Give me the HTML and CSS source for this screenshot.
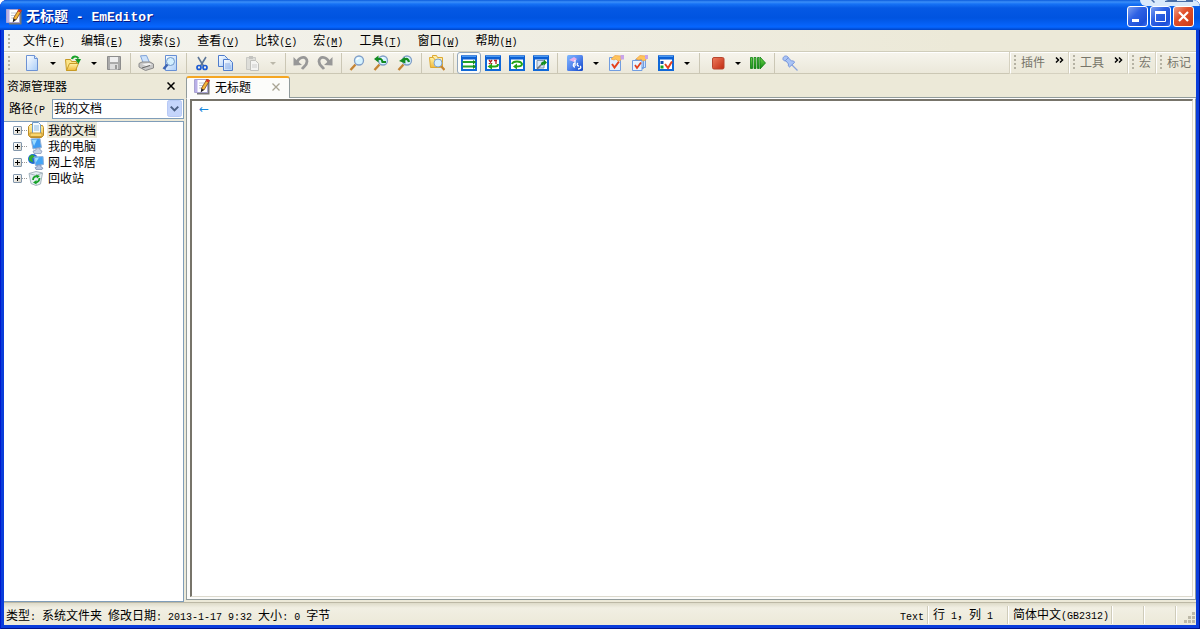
FILE: index.html
```html
<!DOCTYPE html>
<html lang="zh-CN">
<head>
<meta charset="utf-8">
<title>无标题 - EmEditor</title>
<link rel="stylesheet" href="styles.css">
</head>
<body>
<svg class="defs" aria-hidden="true">
<defs>
<linearGradient id="gpage" x2="1" y2="1"><stop offset="0" stop-color="#fff"/><stop offset="1" stop-color="#a9cdf8"/></linearGradient>
<linearGradient id="gfold" y2="1" x2="0"><stop offset="0" stop-color="#fff3a8"/><stop offset="1" stop-color="#f0b93c"/></linearGradient>
<linearGradient id="gblue" x2="1" y2="1"><stop offset="0" stop-color="#7fb8ff"/><stop offset=".45" stop-color="#5a8cf0"/><stop offset="1" stop-color="#1045c8"/></linearGradient>
<linearGradient id="gred" x2="1" y2="1"><stop offset="0" stop-color="#ee7c5e"/><stop offset="1" stop-color="#c02a10"/></linearGradient>
<linearGradient id="ggreen" x2="0" y2="1"><stop offset="0" stop-color="#6fd84e"/><stop offset="1" stop-color="#11890f"/></linearGradient>
<symbol id="app" viewBox="0 0 16 16"><path d="M3 2.500h12.500v13H3z" fill="#777"/><path d="M.5.5h13v13H.5z" fill="#fff" stroke="#a9a3d0"/><path d="M1 1h2.500v12H1z" fill="#b9b0e8"/><path d="M5 4h5M5 6.500h4M5 9h3" stroke="#c3c9d8"/><path d="M13 0l2.700 1.400-5.700 9.600-2.700-1.400z" fill="#f5b73a" stroke="#6b3510" stroke-width=".7"/><path d="M13 0l2.700 1.400-1.300 2.200-2.700-1.400z" fill="#d5362a"/><path d="M7.300 9.600L10 11l-3.300 2.500z" fill="#222"/></symbol>
<symbol id="new" viewBox="0 0 16 16"><path d="M2.500.5h8l3 3v12h-11z" fill="url(#gpage)" stroke="#6c92d4"/><path d="M10.500.5v3h3" fill="#dceafe" stroke="#6c92d4"/></symbol>
<symbol id="open" viewBox="0 0 16 16"><path d="M.5 4.500h5l1 2h5v9H1.500z" fill="#fbe488" stroke="#c79a25"/><path d="M1.500 15.500l3-7h9l-3 7z" fill="url(#gfold)" stroke="#c79a25"/><path d="M7 4c1-3.500 5-3 6.500-.5" fill="none" stroke="#18a32a" stroke-width="2.200"/><path d="M10 4h6l-2.500 5z" fill="#139824"/></symbol>
<symbol id="save" viewBox="0 0 16 16"><path d="M1.500 1.500h13v13h-13z" fill="#aaa" stroke="#8d8d8d"/><path d="M4 2h8v5H4z" fill="#efefef"/><path d="M4 9h8v5.500H4z" fill="#ddd"/><path d="M9 10h2v4H9z" fill="#999"/></symbol>
<symbol id="print" viewBox="0 0 16 16"><path d="M2.500.8l6-.3 3 7H5z" fill="#cde2fb" stroke="#7fa3d8"/><path d="M1 8.500l3-1.500h8l3.500 2v4l-8 2.500L1 12z" fill="#c7c7c7" stroke="#8a8a8a"/><path d="M4 9l7-1 3 1.500-6 1.500z" fill="#f1f1f1"/><path d="M4 13l8-2.500" stroke="#666"/></symbol>
<symbol id="preview" viewBox="0 0 16 16"><path d="M3.500.5h11v15h-11z" fill="url(#gpage)" stroke="#668fd4"/><circle cx="8.500" cy="6.500" r="4" fill="#d2efff" stroke="#7299c7"/><path d="M5.500 9.500L1.500 14" stroke="#3d65b4" stroke-width="2.500"/></symbol>
<symbol id="cut" viewBox="0 0 16 16"><path d="M4 2l5.500 9M12 2L6.500 11" stroke="#5d7698" stroke-width="1.600"/><circle cx="5" cy="12.500" r="2" fill="none" stroke="#1c5ad2" stroke-width="1.700"/><circle cx="11" cy="12.500" r="2" fill="none" stroke="#1c5ad2" stroke-width="1.700"/></symbol>
<symbol id="copy" viewBox="0 0 16 16"><path d="M.5.5h6l3 3v8h-9z" fill="url(#gpage)" stroke="#4f7ccc"/><path d="M5.500 4.500h6l3 3v8h-9z" fill="url(#gpage)" stroke="#4f7ccc"/><path d="M7 9h5M7 11h6M7 13h6" stroke="#8eaee6"/></symbol>
<symbol id="paste" viewBox="0 0 16 16"><path d="M2.500 2.500h9v12h-9z" fill="#deded9" stroke="#c9c9c4"/><path d="M5 1h4v3H5z" fill="#c3c3bf"/><path d="M6.500 5.500h5l3 3v7h-8z" fill="#f4f4f2" stroke="#c0c0bc"/><path d="M8 10h5M8 12h5" stroke="#ccc"/></symbol>
<symbol id="undo" viewBox="0 0 16 16"><path d="M4 7C7 1 14 1 14 6.500c0 3.500-3 5-5 7.500" fill="none" stroke="#989898" stroke-width="2.800"/><path d="M.5 2l3 3 5.500 5-8.500.5z" fill="#989898"/></symbol>
<symbol id="find" viewBox="0 0 16 16"><path d="M6.500 9.500L1.500 15" stroke="#c48433" stroke-width="2.400"/><circle cx="10" cy="5.500" r="4.500" fill="#d5f3ff" stroke="#819fc8" stroke-width="1.300"/><path d="M7.500 5c.5-1.500 1.500-2 3-2" fill="none" stroke="#fff" stroke-width="1.300"/></symbol>
<symbol id="findn" viewBox="0 0 16 16"><use href="#find"/><path d="M5 4h2.500c1 0 1.500 1 2 3H13" fill="none" stroke="#128a22" stroke-width="2.200"/><path d="M1 4L5.500.5v7z" fill="#128a22"/></symbol>
<symbol id="findp" viewBox="0 0 16 16"><use href="#find"/><path d="M6 6c2-3 5-3 6 1" fill="none" stroke="#128a22" stroke-width="2.200"/><path d="M2 6l6-4 .5 6.500z" fill="#128a22"/></symbol>
<symbol id="findf" viewBox="0 0 16 16"><path d="M3.500.5h4l1 2h5v9h-10z" fill="#fcebab" stroke="#dda931"/><path d="M.5 2.500h4l1 2h6v8H1.500z" fill="url(#gfold)" stroke="#dda931"/><circle cx="9" cy="8" r="4" fill="#d5effd" stroke="#7fa3cf"/><path d="M12 11l3.500 4" stroke="#c6842f" stroke-width="2.300"/></symbol>
<symbol id="win" viewBox="0 0 16 16"><path d="M1 1.500h14v13.500H1z" fill="#fff" stroke="#1169d8" stroke-width="2"/><path d="M0 .5h16v4H0z" fill="#0c5fd2"/><path d="M1 1.500h14" stroke="#4b9bf5"/></symbol>
<symbol id="w1" viewBox="0 0 16 16"><use href="#win"/><path d="M1.500 7h13M1.500 11.500h13" stroke="#22a128" stroke-width="1.800"/><path d="M12 5l3 2-3 2.500zM12 9.500l3 2-3 2.500z" fill="#148d1c"/></symbol>
<symbol id="w2" viewBox="0 0 16 16"><use href="#win"/><path d="M4 5l3 4M7 5L4 9M9 5.500h3M11 5.500v3.500" stroke="#b51e22" stroke-width="1.300"/><path d="M6 11.500h4c2 0 3-1 3-2.500" fill="none" stroke="#24a315" stroke-width="2"/><path d="M2.500 11.500L7 8.500v6z" fill="#24a315"/></symbol>
<symbol id="w3" viewBox="0 0 16 16"><use href="#win"/><path d="M3 9c1-3.500 9-3.500 10 0 0 2-3 2.500-6 2.500" fill="none" stroke="#24a315" stroke-width="2"/><path d="M4 11.500L8 8.500v6z" fill="#24a315"/></symbol>
<symbol id="w4" viewBox="0 0 16 16"><use href="#win"/><path d="M4 5.500h7V13H4z" fill="#d8e8f8" stroke="#8196b0"/><path d="M4 14l5-5" stroke="#777" stroke-width="1.600"/><path d="M8 9.500c0-3 2-3 3-3V4.500l3 3-3 3v-2l-1 2z" fill="#16901d"/></symbol>
<symbol id="conf" viewBox="0 0 16 16"><rect width="16" height="16" rx="1.500" fill="url(#gblue)"/><path d="M2 5l5-3 3 2-3 3z" fill="#e9b0ea"/><path d="M8 5v6M8 8c-2 0-2.500 4 0 4M11 8c-1.500 1-1 3 1 3M11 14c3 0 3.500-2 2-3" fill="none" stroke="#fff" stroke-width="1.300"/></symbol>
<symbol id="prop" viewBox="0 0 16 16"><path d="M1.500 2.500h11v13h-11z" fill="#e1f0ff" stroke="#719de0"/><path d="M4 9l2.500 3.500 4.500-6" fill="none" stroke="#e5421c" stroke-width="2"/><path d="M3 4l4-3.500 6 .5v4l-3 1-2-2-2 1z" fill="#ffc45b" stroke="#eda045" stroke-width=".7"/><path d="M12.500 0H16v4.500h-3.500z" fill="#c8a5ea"/></symbol>
<symbol id="props" viewBox="0 0 16 16"><path d="M5.500 3.500h8v9h-8zM3.500 4.500h8v9h-8z" fill="#d0e3fc" stroke="#719de0"/><path d="M.5 5.500H10v10H.5z" fill="#e8f4ff" stroke="#719de0"/><path d="M3 10l2 3 4-5.500" fill="none" stroke="#e5421c" stroke-width="1.800"/><path d="M4 4l4-3.500 6 .5v4l-3 1-2-2-2 1z" fill="#ffc45b" stroke="#eda045" stroke-width=".7"/><path d="M13 0h3v4h-3z" fill="#c8a5ea"/></symbol>
<symbol id="cust" viewBox="0 0 16 16"><use href="#win"/><path d="M2.500 6h3v3h-3z" fill="#114eae"/><path d="M2.500 10.500h3v3h-3z" fill="#19a51b"/><path d="M7 9l3 4 4-6.500" fill="none" stroke="#e5421c" stroke-width="2"/></symbol>
<symbol id="rec" viewBox="0 0 16 16"><rect x="3.500" y="2.500" width="11.500" height="11.500" rx="1.500" fill="url(#gred)" stroke="#b8452e"/></symbol>
<symbol id="run" viewBox="0 0 16 16"><path d="M.5 2.500h2v11h-2zM4 2.500h2v11H4zM7.500 2.500h1.500v11H7.500zM10 2l5.500 6-5.500 6z" fill="url(#ggreen)" stroke="#0c7d14" stroke-width=".8"/></symbol>
<symbol id="pin" viewBox="0 0 16 16"><path d="M9 9l6.500 6.500" stroke="#89a4dd" stroke-width="1.300"/><path d="M1 4.500C.5 2 3 0 5.500 1.500l1 1.500 3 3c2-.5 3 .5 3 1.500l-5 4.500c-1-.5-1.500-1.500-1-3L4 6C2.500 6 1.500 5.500 1 4.500z" fill="#a9c4f5" stroke="#7796dc"/><path d="M3 6l3.500-3.500" stroke="#7796dc"/></symbol>
<symbol id="docs" viewBox="0 0 16 16"><path d="M.5 4.500l2-2h3l1 1h8l1 2v8l-2 2h-11l-2-2z" fill="url(#gfold)" stroke="#bd8d27"/><path d="M4.500.5h6l2 2v9h-8z" fill="#f4fbff" stroke="#6e9cc9"/><path d="M6 4h5M6 6h5M6 8h5" stroke="#8cb9e0"/><path d="M2 11h12v3.500H2z" fill="#f9d66d" stroke="#c79936"/></symbol>
<symbol id="pc" viewBox="0 0 16 16"><path d="M3 1l9-.5 1.500 9-8.500 1.500z" fill="#3c9bf2" stroke="#9bb4d5"/><path d="M4 2l5-.4L6 8z" fill="#9cdcff"/><path d="M8 10h4v2l2 1-1 2.500H6L5 13l3-1z" fill="#c5d1e5" stroke="#8394b8" stroke-width=".7"/></symbol>
<symbol id="net" viewBox="0 0 16 16"><circle cx="5" cy="5" r="5" fill="#1f6ad4"/><path d="M1 3l3-2.500 3 2-3 2 1 4-4-2z" fill="#35ad32"/><path d="M6 3l9-.5.500 8-8 1z" fill="#45a5f5" stroke="#8fb0da"/><path d="M7 4l4-.4L7.500 9z" fill="#a0e2ff"/><path d="M9 11h4v2l2 1-1 1.500H8l-1-2 2-.5z" fill="#b5c4e0" stroke="#7388b4" stroke-width=".7"/></symbol>
<symbol id="bin" viewBox="0 0 16 16"><path d="M1 3.500l7-2 6.500 1.500-2 11-4.500 1.500-5-2z" fill="#e4edf1" stroke="#a6b5be"/><path d="M1 3.500l7 2 6.500-2.500" fill="none" stroke="#a6b5be"/><path d="M5 10c0-3 2-4 4-3.500M11.500 8c0 3-1.500 4-4 4.500" fill="none" stroke="#18a32a" stroke-width="1.800"/><path d="M8 4.500l4 1.500-3 2.500zM8.500 10v4.500L5 12.500z" fill="#18a32a"/></symbol>
</defs>
</svg>

<div class="window">
  <header class="titlebar">
    <svg class="icon"><use href="#app"/></svg>
    <h1>无标题<span> - EmEditor</span></h1>
    <div class="controls">
      <button aria-label="最小化"><svg viewBox="0 0 19 19"><path d="M4 12h7v3H4z" fill="#fff"/></svg></button>
      <button aria-label="最大化"><svg viewBox="0 0 19 19"><path d="M4.500 5.500h10v9h-10z" fill="none" stroke="#fff"/><path d="M4 4h11v3H4z" fill="#fff"/></svg></button>
      <button class="close" aria-label="关闭"><svg viewBox="0 0 19 19"><path d="M5 5l9 9M14 5l-9 9" stroke="#fff" stroke-width="2.200"/></svg></button>
    </div>
    <div class="floating"><svg viewBox="0 0 60 7"><path d="M11 0h2l2 2-1 1zM25 1l3-1h9v1h9V0h7v2H25z" fill="#476da8"/></svg></div>
  </header>

  <nav class="menubar">
    <i class="grip"></i>
    <button>文件<span>(<u>F</u>)</span></button>
    <button>编辑<span>(<u>E</u>)</span></button>
    <button>搜索<span>(<u>S</u>)</span></button>
    <button>查看<span>(<u>V</u>)</span></button>
    <button>比较<span>(<u>C</u>)</span></button>
    <button>宏<span>(<u>M</u>)</span></button>
    <button>工具<span>(<u>T</u>)</span></button>
    <button>窗口<span>(<u>W</u>)</span></button>
    <button>帮助<span>(<u>H</u>)</span></button>
  </nav>

  <div class="toolbars">
    <div class="tools" role="toolbar" aria-label="标准">
      <i class="grip"></i>
      <button class="tool" aria-label="新建"><svg class="icon"><use href="#new"/></svg></button><button class="drop" aria-label="新建选项"></button>
      <button class="tool" aria-label="打开"><svg class="icon"><use href="#open"/></svg></button><button class="drop" aria-label="打开选项"></button>
      <button class="tool" aria-label="保存"><svg class="icon"><use href="#save"/></svg></button>
      <i class="sep"></i>
      <button class="tool" aria-label="打印"><svg class="icon"><use href="#print"/></svg></button>
      <button class="tool" aria-label="打印预览"><svg class="icon"><use href="#preview"/></svg></button>
      <i class="sep"></i>
      <button class="tool" aria-label="剪切"><svg class="icon"><use href="#cut"/></svg></button>
      <button class="tool" aria-label="复制"><svg class="icon"><use href="#copy"/></svg></button>
      <button class="tool spaced" aria-label="粘贴"><svg class="icon"><use href="#paste"/></svg></button><button class="drop off" aria-label="粘贴选项"></button>
      <i class="sep"></i>
      <button class="tool" aria-label="撤销"><svg class="icon"><use href="#undo"/></svg></button>
      <button class="tool" aria-label="重做"><svg class="icon flip"><use href="#undo"/></svg></button>
      <i class="sep"></i>
      <button class="tool" aria-label="查找"><svg class="icon"><use href="#find"/></svg></button>
      <button class="tool" aria-label="查找上一个"><svg class="icon"><use href="#findn"/></svg></button>
      <button class="tool" aria-label="查找下一个"><svg class="icon"><use href="#findp"/></svg></button>
      <i class="sep"></i>
      <button class="tool" aria-label="在文件中查找"><svg class="icon"><use href="#findf"/></svg></button>
      <i class="sep"></i>
      <button class="tool pressed" aria-label="不换行" aria-pressed="true"><svg class="icon"><use href="#w1"/></svg></button>
      <button class="tool" aria-label="按字符数换行"><svg class="icon"><use href="#w2"/></svg></button>
      <button class="tool" aria-label="按窗口换行"><svg class="icon"><use href="#w3"/></svg></button>
      <button class="tool" aria-label="按页面换行"><svg class="icon"><use href="#w4"/></svg></button>
      <i class="sep"></i>
      <button class="tool spaced" aria-label="配置"><svg class="icon"><use href="#conf"/></svg></button><button class="drop" aria-label="配置选项"></button>
      <button class="tool" aria-label="当前配置属性"><svg class="icon"><use href="#prop"/></svg></button>
      <button class="tool" aria-label="所有配置属性"><svg class="icon"><use href="#props"/></svg></button>
      <button class="tool spaced" aria-label="自定义"><svg class="icon"><use href="#cust"/></svg></button><button class="drop" aria-label="自定义选项"></button>
      <i class="sep"></i>
      <button class="tool spaced" aria-label="录制宏"><svg class="icon"><use href="#rec"/></svg></button><button class="drop" aria-label="录制选项"></button>
      <button class="tool" aria-label="运行宏"><svg class="icon"><use href="#run"/></svg></button>
      <i class="sep"></i>
      <button class="tool" aria-label="固定"><svg class="icon"><use href="#pin"/></svg></button>
    </div>
    <div class="band"><i class="grip"></i>插件<button class="more" aria-label="更多插件"><svg viewBox="0 0 9 6"><path d="M1 .5L3.500 3 1 5.500M5 .5L7.500 3 5 5.500" fill="none" stroke="#000" stroke-width="1.500"/></svg></button></div>
    <div class="band"><i class="grip"></i>工具<button class="more" aria-label="更多工具"><svg viewBox="0 0 9 6"><path d="M1 .5L3.500 3 1 5.500M5 .5L7.500 3 5 5.500" fill="none" stroke="#000" stroke-width="1.500"/></svg></button></div>
    <div class="band"><i class="grip"></i>宏</div>
    <div class="band"><i class="grip"></i>标记</div>
  </div>

  <main class="work">
    <aside class="explorer">
      <div class="caption"><h2>资源管理器</h2><button aria-label="关闭资源管理器"><svg viewBox="0 0 8 8"><path d="M.5.5l7 7M7.500.5l-7 7" stroke="#000" stroke-width="1.500"/></svg></button></div>
      <div class="path">
        <label for="path">路径<span>(P</span></label>
        <div class="combo"><select id="path"><option>我的文档</option></select><svg viewBox="0 0 16 18"><rect x=".5" y=".5" width="15" height="17" rx="2" fill="#c5d5fb" stroke="#b3c6f4"/><path d="M4 7l4 4 4-4" fill="none" stroke="#4d6185" stroke-width="2.200"/></svg></div>
      </div>
      <ul class="tree">
        <li><button aria-label="展开"></button><svg class="icon"><use href="#docs"/></svg><span class="selected">我的文档</span></li>
        <li><button aria-label="展开"></button><svg class="icon"><use href="#pc"/></svg><span>我的电脑</span></li>
        <li><button aria-label="展开"></button><svg class="icon"><use href="#net"/></svg><span>网上邻居</span></li>
        <li><button aria-label="展开"></button><svg class="icon"><use href="#bin"/></svg><span>回收站</span></li>
      </ul>
    </aside>
    <section class="documents">
      <div class="tabs">
        <div class="tab"><svg class="icon"><use href="#app"/></svg><span>无标题</span><button aria-label="关闭标签"><svg viewBox="0 0 8 8"><path d="M.5.5l7 7M7.500.5l-7 7" stroke="#a9a493" stroke-width="1.300"/></svg></button></div>
      </div>
      <div class="frame"><textarea aria-label="无标题" spellcheck="false">←</textarea></div>
    </section>
  </main>

  <footer class="status">
    <p class="info">类型<span>: </span>系统文件夹<span> </span>修改日期<span>: 2013-1-17 9:32 </span>大小<span>: 0 </span>字节</p>
    <p class="mode"><span>Text</span></p>
    <p class="cell caret">行<span> 1</span>，列<span> 1</span></p>
    <p class="cell encoding">简体中文<span>(GB2312)</span></p>
    <i class="cell"></i><i class="cell"></i>
    <div class="cell end"><svg viewBox="0 0 12 12"><path d="M8 0h3v3H8zM4 4h3v3H4zM8 4h3v3H8zM0 8h3v3H0zM4 8h3v3H4zM8 8h3v3H8z" fill="#bdb9a8"/></svg></div>
  </footer>
</div>
</body>
</html>
```
FILE: styles.css
```css
* { box-sizing: border-box; }
html, body { height: 100%; margin: 0; }
body {
  background: #fff;
  color: #000;
  font: 12px/16px "Noto Sans CJK SC", sans-serif;
}
h1, h2, p, ul { margin: 0; padding: 0; font-weight: normal; }
button { padding: 0; border: 0; background: none; color: inherit; font: inherit; }
svg { display: block; }
.defs { position: absolute; width: 0; height: 0; }
.icon { width: 16px; height: 16px; flex: none; }

/* Latin text sits on a half-width grid beside the Chinese text. */
.menubar span, .path label span, .status span {
  font: 10px/12px "Liberation Mono", monospace;
  white-space: pre;
}

.window {
  display: flex;
  flex-direction: column;
  height: 100vh;
  padding: 0 4px 4px 4px;
  border-radius: 7px 7px 0 0;
  background: #0a3ddb;
  box-shadow: inset 1px 0 #0019cf, inset -1px -1px #00138c;
  overflow: hidden;
}

.titlebar {
  position: relative;
  display: flex;
  align-items: center;
  flex: none;
  height: 30px;
  margin: 0 -4px;
  padding: 3px 6px 0 6px;
  background: linear-gradient(#0a5bdc 0, #3b8ff8 2px, #1672f5 4px, #0559e4 8px, #0054e0 18px, #0560f5 24px, #0666ff 27px, #0043c4 30px);
}
.titlebar h1 {
  flex: 1;
  margin-left: 4px;
  color: #fff;
  font-size: 14px;
  font-weight: bold;
  line-height: 18px;
  text-shadow: 1px 1px #0a1883;
}
.titlebar h1 span { font-family: "Liberation Mono", monospace; font-size: 13px; white-space: pre; }
.controls { display: flex; gap: 2px; }
.controls button {
  width: 21px;
  height: 21px;
  border: 1px solid #fff;
  border-radius: 3px;
  background: linear-gradient(135deg, #7c9ff0, #2f62e4 40%, #1c4fd8 80%, #3a6cf0);
}
.controls .close { background: linear-gradient(135deg, #f0a088, #e2502c 40%, #c93a14); }
.floating {
  position: absolute;
  top: 0;
  right: 0;
  width: 60px;
  height: 6px;
  border-radius: 0 0 0 6px;
  background: #d9e9fb;
}

.grip {
  flex: none;
  width: 2px;
  height: 14px;
  margin: 0 10px 0 4px;
  background: repeating-linear-gradient(#b5b2a3 0 2px, transparent 2px 4px);
}
.menubar {
  display: flex;
  align-items: center;
  flex: none;
  height: 21px;
  background: linear-gradient(90deg, #f4f4f0, #ece9d8 80%);
}
.menubar .grip { margin-right: 5px; }
.menubar button { padding: 0 8px; white-space: nowrap; }
.menubar u { text-underline-offset: 1px; }

.toolbars { display: flex; flex: none; height: 23px; border-top: 1px solid #d0cdbb; background: #ece9d8; }
.tools {
  display: flex;
  align-items: center;
  flex: 1;
  min-width: 0;
  background: linear-gradient(#f6f4ec, #ebe8da);
  border-top: 1px solid #fff;
  border-bottom: 1px solid #cbc7b4;
}
.tool { display: grid; place-items: center; flex: none; width: 24px; height: 22px; }
.spaced { margin-left: 2px; }
.pressed { border: 1px solid #93a7bd; border-radius: 3px; background: #fbfbf8; }
.flip { transform: scaleX(-1); }
.drop { display: grid; place-items: center; flex: none; width: 17px; height: 20px; }
.drop::before { content: ""; border: 3px solid transparent; border-top-color: #000; border-bottom: 0; }
.drop.off::before { border-top-color: #bbb8aa; }
.sep { flex: none; width: 8px; height: 20px; background: linear-gradient(90deg, transparent 4px, #cbc7b5 4px 5px, transparent 5px); }
.band {
  display: flex;
  align-items: center;
  flex: none;
  padding: 0 5px 2px 0;
  border-left: 1px solid #fff;
  border-top: 1px solid #fff;
  border-bottom: 1px solid #d5d1c0;
  box-shadow: -1px 0 #d5d1c0;
  background: linear-gradient(#f0eee3, #ebe8d8);
  color: #77756a;
}
.band .grip { margin: 0 5px 0 3px; }
.more { align-self: flex-start; width: 9px; margin: 4px 0 0 10px; }

.work { display: flex; flex: 1; min-height: 0; background: #ece9d8; }
.explorer { display: flex; flex-direction: column; flex: none; width: 180px; }
.caption { display: flex; align-items: center; justify-content: space-between; height: 24px; padding: 0 9px 0 3px; }
.caption h2 { font-size: 12px; }
.caption button { width: 8px; }
.path { display: flex; align-items: center; height: 21px; padding-left: 5px; }
.path label { margin-right: 7px; white-space: nowrap; }
.combo {
  display: flex;
  align-items: center;
  flex: 1;
  height: 20px;
  padding-right: 1px;
  border: 1px solid #7f9db9;
  background: #fff;
}
.combo select {
  flex: 1;
  min-width: 0;
  height: 18px;
  padding: 0 1px 2px;
  border: 0;
  appearance: none;
  background: none;
  color: #000;
  font: inherit;
}
.combo svg { width: 15px; height: 17px; }
.tree {
  flex: 1;
  margin-top: 2px;
  border: 1px solid #7f9db9;
  border-left: 0;
  background: #fff;
  list-style: none;
}
.tree li {
  display: flex;
  align-items: center;
  height: 16px;
  padding-left: 9px;
  background: repeating-linear-gradient(90deg, #999 0 1px, transparent 1px 2px) 18px 8px / 5px 1px no-repeat;
}
.tree button {
  width: 9px;
  height: 9px;
  margin-right: 6px;
  border: 1px solid #8397ac;
  border-radius: 1px;
  background:
    linear-gradient(#000, #000) center / 5px 1px no-repeat,
    linear-gradient(#000, #000) center / 1px 5px no-repeat,
    linear-gradient(135deg, #fff, #d8d4c8);
}
.tree span { margin-left: 3px; padding: 0 1px; }
.tree .selected { background: #ece9d8; }

.documents { display: flex; flex-direction: column; flex: 1; min-width: 0; margin-left: 2px; }
.tabs { display: flex; flex: none; height: 24px; padding-top: 2px; border-bottom: 1px solid #919b9c; }
.tab {
  display: flex;
  align-items: center;
  width: 104px;
  height: 22px;
  padding: 0 9px 2px 7px;
  border: 1px solid #919b9c;
  border-top: 2px solid #f5a623;
  border-bottom: 0;
  border-radius: 3px 3px 0 0;
  background: #fcfcfa;
}
.tab span { flex: 1; margin-left: 5px; }
.tab button { width: 8px; }
.frame {
  display: flex;
  flex: 1;
  margin-bottom: 2px;
  padding: 0 2px 2px 3px;
  border: 1px solid #919b9c;
  border-top-color: #fff;
  background: #fbfbf9;
}
.frame textarea {
  flex: 1;
  padding: 0 7px;
  border: 1px solid #dddace;
  border-top: 2px solid #77746a;
  border-left: 2px solid #77746a;
  outline: 0;
  background: #fff;
  color: #1787dd;
  font: 12px/16px "DejaVu Sans", sans-serif;
  resize: none;
}

.status { display: flex; align-items: center; flex: none; height: 23px; padding-top: 2px; border-top: 1px solid #bcb8a5; background: linear-gradient(#dedbc9, #f1efe3 5px, #ece9d8); white-space: nowrap; }
.info { flex: 1; padding-left: 2px; }
.mode { padding-right: 4px; }
.cell { height: 18px; flex: none; width: 32px; border-left: 1px solid #fff; box-shadow: -1px 0 #cfccba; }
.caret { width: 80px; padding-left: 4px; }
.encoding { width: 104px; padding-left: 4px; }
.end { display: flex; align-items: flex-end; justify-content: flex-end; width: 20px; }
.end svg { width: 12px; height: 12px; }
```
